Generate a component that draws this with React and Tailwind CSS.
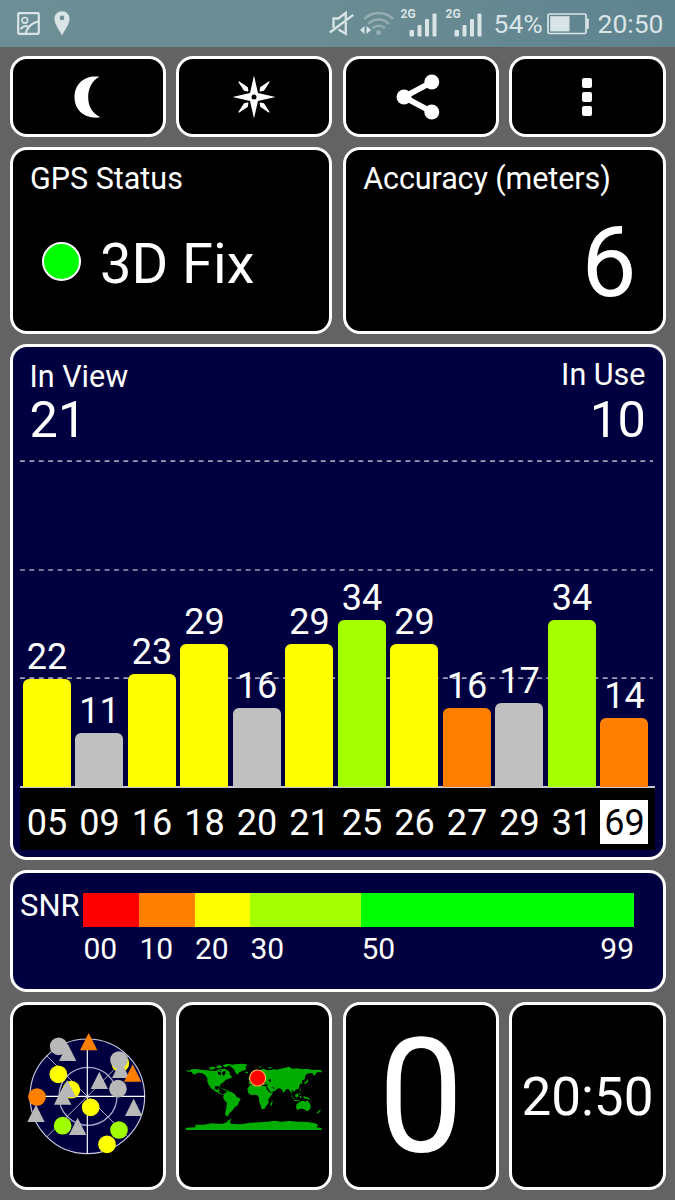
import clsx from 'clsx'

// Base line sits at 0 dB, every dB is this many pixels tall.
const PX_PER_DB = 4.92

const SATELLITES = [
  { id: '05', snr: 22, color: 'bg-[#ffff00]' },
  { id: '09', snr: 11, color: 'bg-[#c0c0c0]' },
  { id: '16', snr: 23, color: 'bg-[#ffff00]' },
  { id: '18', snr: 29, color: 'bg-[#ffff00]' },
  { id: '20', snr: 16, color: 'bg-[#c0c0c0]' },
  { id: '21', snr: 29, color: 'bg-[#ffff00]' },
  { id: '25', snr: 34, color: 'bg-[#a6ff00]' },
  { id: '26', snr: 29, color: 'bg-[#ffff00]' },
  { id: '27', snr: 16, color: 'bg-[#ff8000]' },
  { id: '29', snr: 17, color: 'bg-[#c0c0c0]' },
  { id: '31', snr: 34, color: 'bg-[#a6ff00]' },
  { id: '69', snr: 14, color: 'bg-[#ff8000]', glonass: true },
]

const SNR_SCALE = [
  { label: '00', box: 'w-[56px]', color: 'bg-[#ff0000]' },
  { label: '10', box: 'w-[55.5px]', color: 'bg-[#ff8000]' },
  { label: '20', box: 'w-[55.5px]', color: 'bg-[#ffff00]' },
  { label: '30', box: 'w-[111px]', color: 'bg-[#a6ff00]' },
  { label: '50', box: 'flex-1', color: 'bg-[#00ff00]', last: '99' },
]

const YELLOW = '#ffff00'
const GREY = '#b8b8b8'
const LIME = '#a0ff00'
const ORANGE = '#ff8000'

// Sky plot markers: GPS are dots, GLONASS are triangles (x, y = centre).
const SKY = [
  { x: 146, y: 79, color: GREY },
  { x: 173, y: 98, color: GREY, tri: true },
  { x: 236, y: 66, color: ORANGE, tri: true },
  { x: 331, y: 130, color: YELLOW },
  { x: 332, y: 149, color: GREY, tri: true },
  { x: 327, y: 120, color: GREY },
  { x: 368, y: 160, color: ORANGE, tri: true },
  { x: 145, y: 163, color: YELLOW },
  { x: 268, y: 182, color: GREY, tri: true },
  { x: 324, y: 206, color: GREY },
  { x: 184, y: 209, color: YELLOW },
  { x: 172, y: 207, color: GREY, tri: true },
  { x: 158, y: 229, color: GREY, tri: true },
  { x: 81, y: 231, color: ORANGE },
  { x: 78, y: 281, color: GREY, tri: true },
  { x: 242, y: 262, color: YELLOW },
  { x: 371, y: 263, color: GREY, tri: true },
  { x: 158, y: 317, color: LIME },
  { x: 203, y: 320, color: GREY, tri: true },
  { x: 327, y: 330, color: LIME },
  { x: 291, y: 373, color: YELLOW },
]

function Card({ className, children }) {
  return (
    <section className={clsx('rounded-[17px] border-[3px] border-white', className)}>
      {children}
    </section>
  )
}

function Signal({ className }) {
  return (
    <div className={clsx('relative h-[26px] w-[36px]', className)}>
      <span className="absolute left-0 top-[-3px] text-[12px] font-bold leading-none">2G</span>
      <svg className="absolute bottom-0 right-0" width="28" height="24" viewBox="0 0 28 24" fill="currentColor">
        <rect x="0.5" y="17" width="4.5" height="6.5" rx="1" />
        <rect x="8.5" y="12" width="4" height="11.5" rx="1" />
        <rect x="16" y="6" width="4" height="17.5" rx="1" />
        <rect x="23.5" y="0.5" width="4" height="23" rx="1" />
      </svg>
    </div>
  )
}

function StatusBar() {
  return (
    <header className="flex h-[47px] items-center bg-linear-to-r from-[#6c8f95] via-[#6a8c93] to-[#5f8490] pl-[17px] text-[#d9e4e6]">
      <svg width="23" height="23" viewBox="0 0 23 23" fill="none" stroke="currentColor">
        <rect x="1.2" y="1.2" width="20.6" height="20.6" rx="1" strokeWidth="2.2" />
        <circle cx="7.8" cy="8.3" r="2.8" strokeWidth="1.6" />
        <path d="M3.5 17C6.5 13.8 9 13.2 11.5 15.2M8.5 21C10.5 15.5 14.5 11 21 9.5" strokeWidth="1.9" />
      </svg>
      <svg className="ml-[14px]" width="16" height="25" viewBox="0 0 16 25" fill="currentColor">
        <path
          fillRule="evenodd"
          d="M8 0.3C12.3 0.3 15.5 3.6 15.5 7.8C15.5 13 11.5 18 8 24.5C4.5 18 0.5 13 0.5 7.8C0.5 3.6 3.7 0.3 8 0.3ZM8 4.6A2.3 2.3 0 1 0 8 9.2A2.3 2.3 0 1 0 8 4.6Z"
        />
      </svg>

      <svg className="ml-[258.5px]" width="25" height="25" viewBox="0 0 25 25" fill="none" stroke="currentColor" strokeWidth="2.3">
        <path d="M4.5 17V7.5H9.5L16.8 1.8V9M9.5 18.5L16.8 22.8V11" />
        <path d="M0.8 21.5L24.3 3.8" />
      </svg>
      <svg className="ml-[6px]" width="34" height="25" viewBox="0 0 34 25" fill="none" stroke="currentColor">
        <g strokeWidth="2.6" opacity="0.38">
          <path d="M4.3 8A20 20 0 0 1 33 8" />
          <path d="M8.3 12.8A14.5 14.5 0 0 1 29 12.8" />
          <path d="M12.5 17.2A8.8 8.8 0 0 1 24.8 17.2" />
          <circle cx="18.6" cy="21.6" r="1.2" fill="currentColor" />
        </g>
        <path d="M4.5 15V23L0 19ZM6.5 15V23L11.2 19Z" fill="currentColor" stroke="none" />
      </svg>
      <Signal className="ml-[7px]" />
      <Signal className="ml-[9px]" />
      <span className="ml-[12px] w-[53px] pt-px text-[26.5px] leading-none">54%</span>
      <svg width="42" height="22" viewBox="0 0 42 22" fill="currentColor">
        <rect x="1" y="1" width="38" height="19.5" rx="1.5" fill="none" stroke="currentColor" strokeWidth="1.7" />
        <rect x="3.2" y="3.2" width="19.3" height="15.2" />
        <rect x="39.5" y="5.5" width="2.3" height="10.5" rx="0.8" />
      </svg>
      <span className="ml-[9px] pt-px text-[26.5px] leading-none">20:50</span>
    </header>
  )
}

function Toolbar() {
  return (
    <nav className="grid h-[81px] grid-cols-4 gap-[10.5px]">
      <Card className="flex items-center justify-center bg-black">
        <svg width="27" height="42" viewBox="0 0 27 42" fill="#fff">
          <path d="M25.5 0.8C12 -1.5 0.5 7 0.5 21C0.5 35.5 12.5 43.5 26.5 41.3C17.5 37 14.2 29.5 14.2 21C14.2 12.5 18 4.5 25.5 0.8Z" />
        </svg>
      </Card>
      <Card className="flex items-center justify-center bg-black">
        <svg width="44" height="44" viewBox="-22 -22 44 44" fill="#fff">
          <path d="M0 -21.5L4 -4L21.5 0L4 4L0 21.5L-4 4L-21.5 0L-4 -4Z" />
          <path
            d="M-15 -15L-6.8 -9.6L-6.2 -6.2L-9.6 -6.8ZM15 -15L9.6 -6.8L6.2 -6.2L6.8 -9.6ZM15 15L6.8 9.6L6.2 6.2L9.6 6.8ZM-15 15L-9.6 6.8L-6.2 6.2L-6.8 9.6Z"
            stroke="#fff"
            strokeWidth="1.2"
            strokeLinejoin="round"
          />
          <circle r="2.5" fill="#000" />
        </svg>
      </Card>
      <Card className="flex items-center justify-center bg-black">
        <svg className="-ml-[5px]" width="44" height="46" viewBox="0 0 44 46" fill="#fff">
          <path d="M36 8L8 23L36 38" fill="none" stroke="#fff" strokeWidth="5.8" />
          <circle cx="8" cy="23" r="7.5" />
          <circle cx="35.8" cy="8" r="7.5" />
          <circle cx="35.8" cy="38" r="7.5" />
        </svg>
      </Card>
      <Card className="flex flex-col items-center justify-center gap-[4px] bg-black">
        <i className="size-[10px] rounded-[2px] bg-white" />
        <i className="size-[10px] rounded-[2px] bg-white" />
        <i className="size-[10px] rounded-[2px] bg-white" />
      </Card>
    </nav>
  )
}

function SignalChart() {
  return (
    <Card className="flex h-[516px] flex-col bg-[#000040] px-[7.5px] pb-[7px]">
      <div className="flex justify-between px-[9.5px] pt-[14px]">
        <div>
          <p className="text-[30.5px] leading-[32px]">In View</p>
          <p className="mt-[2px] text-[50.5px] leading-[50px]">21</p>
        </div>
        <div className="-mt-[2px] text-right">
          <p className="text-[30.5px] leading-[32px]">In Use</p>
          <p className="mt-[4px] text-[50.5px] leading-[50px] tracking-[-0.5px]">10</p>
        </div>
      </div>

      <div className="relative mt-auto h-[328px] border-b-2 border-[#c8c8d0]">
        {/* 60, 40 and 20 dB guides */}
        <svg className="absolute left-0 top-0" width="635" height="326" stroke="#9f9fbc" strokeWidth="1.7" strokeDasharray="4.9 4.5">
          <path d="M0 1.2H633M0 110H633M0 218.2H633" />
        </svg>
        <div className="relative flex h-[327px] items-end gap-[4.5px] pl-[2.5px]">
          {SATELLITES.map((s) => (
            <div key={s.id} className="flex w-[48px] flex-col items-center">
              <span className="pl-px text-[36px] leading-[44px]">{s.snr}</span>
              <div
                className={clsx('w-full rounded-t-[6px]', s.color)}
                style={{ height: s.snr * PX_PER_DB }}
              />
            </div>
          ))}
        </div>
      </div>
      <div className="flex h-[62px] items-center gap-[4.5px] bg-black pl-[2.5px] pt-[6px]">
        {SATELLITES.map((s) => (
          <span
            key={s.id}
            className={clsx(
              'flex h-[44px] w-[48px] items-center justify-center pl-px pt-[2px] text-[36px] leading-[44px]',
              s.glonass && 'bg-white text-black',
            )}
          >
            {s.id}
          </span>
        ))}
      </div>
    </Card>
  )
}

function SnrLegend() {
  return (
    <Card className="flex h-[122px] bg-[#000040] pl-[7.5px] pr-[28.5px] pt-[20px]">
      <span className="w-[63px] text-[31px] leading-[26px]">SNR</span>
      <div className="flex flex-1">
        {SNR_SCALE.map((s) => (
          <div key={s.label} className={s.box}>
            <div className={clsx('h-[34px]', s.color)} />
            <div className="flex justify-between text-[30px] leading-[44px]">
              <span className="pl-[0.5px]">{s.label}</span>
              {s.last && <span>{s.last}</span>}
            </div>
          </div>
        ))}
      </div>
    </Card>
  )
}

function SkyPlot() {
  return (
    <svg width="126.67" height="126.67" viewBox="42 39 380 380">
      <circle cx="232" cy="229" r="172" fill="#000040" stroke="#c9c9e6" strokeWidth="3.5" />
      <circle cx="234" cy="229" r="87" fill="none" stroke="#a9a9cc" strokeWidth="4" />
      <path d="M232 57V401M60 229H404" stroke="#fff" strokeWidth="3.5" />
      <path d="M110 107L354 351M354 107L110 351" stroke="#c4c4d8" strokeWidth="2.6" />
      {SKY.map((s) =>
        s.tri ? (
          <path key={`${s.x}-${s.y}`} d={`M${s.x} ${s.y - 27}L${s.x + 26} ${s.y + 25}H${s.x - 26}Z`} fill={s.color} />
        ) : (
          <circle key={`${s.x}-${s.y}`} cx={s.x} cy={s.y} r="26.5" fill={s.color} />
        ),
      )}
    </svg>
  )
}

function WorldMap() {
  return (
    <svg width="140" height="71.67" viewBox="27 60 420 215" fill="#00ad00">
      {/* North America */}
      <path d="M32 90L42 92L50 88L62 87L84 90L100 91L112 93L124 92L130 88L136 94L146 92L140 101L146 108L151 101L152 92L160 96L166 104L172 112L162 116L152 119L147 125L138 132L134 138L137 145L131 139L120 139L119 147L127 150L131 145L134 151L131 156L142 163L150 162L146 165L136 162L120 154L108 145L102 136L97 126L97 114L90 105L80 99L68 98L58 104L52 100L50 95L38 95Z" />
      {/* Arctic islands */}
      <path d="M101 83L112 80L122 82L118 88L106 89ZM124 79L134 76L142 80L136 85L126 84ZM130 87L140 88L148 86L160 92L166 98L160 100L152 94L140 92ZM143 76L154 72L172 72L160 79L150 82Z" />
      {/* Greenland and Iceland */}
      <path d="M162 78L178 73L204 71L218 74L212 80L213 89L203 92L193 97L188 104L182 99L178 90L172 83ZM210 95L220 95L219 99L211 99Z" />
      {/* Caribbean */}
      <path d="M137 145L148 147L158 151L164 153L154 152L144 148Z" />
      {/* South America */}
      <path d="M149 160L158 153L170 156L180 163L184 170L197 176L192 187L187 197L179 202L173 211L167 216L161 223L160 229L153 228L150 221L153 208L156 190L149 181L144 173Z" />
      {/* Africa and Madagascar */}
      <path d="M217 146L225 136L244 133L247 137L260 138L274 139L279 151L285 158L294 158L287 169L280 178L281 188L274 198L268 207L260 207L256 195L252 183L252 173L247 166L238 164L229 166L220 159ZM287 190L293 181L291 195L286 198Z" />
      {/* Europe and Asia */}
      <path d="M222 132L223 124L232 122L230 116L240 110L244 100L252 91L266 86L276 91L290 90L295 87L304 89L316 86L330 83L342 80L352 86L368 85L382 88L396 86L412 90L428 89L440 91L440 97L426 97L422 103L414 107L413 99L401 100L392 105L389 118L380 122L383 131L377 130L373 138L371 146L362 149L358 156L354 152L349 151L353 162L346 155L341 147L333 148L326 160L321 150L315 145L307 146L299 153L287 157L281 148L276 139L278 132L266 134L260 128L250 130L243 126L236 128L232 134Z" />
      <path d="M220 115L228 109L230 118L222 121ZM250 80L262 79L256 83ZM277 83L292 80L286 86ZM386 128L395 123L398 116L400 125L390 132ZM374 149L378 144L376 155Z" />
      {/* South-east Asia */}
      <path d="M344 161L356 173L362 179L353 173ZM360 164L369 160L371 169L363 173ZM356 180L374 181L374 184L358 183ZM374 168L380 169L376 176ZM384 168L398 172L409 180L397 177L388 175ZM371 156L378 163L374 164Z" />
      {/* Australia and New Zealand */}
      <path d="M365 192L378 184L386 182L392 187L396 180L404 190L408 199L404 209L396 214L386 207L377 206L366 210L363 201ZM427 216L438 208L435 215L426 222Z" />
      {/* Antarctica */}
      <path d="M32 263L62 262L60 254L86 254L110 250L142 252L154 247L162 239L170 237L164 245L168 251L196 253L226 248L250 247L276 245L300 242L318 245L344 243L372 245L400 246L420 250L430 254L424 262L440 264V270H32Z" />
      {/* Inland seas */}
      <g fill="#000">
        <path d="M128 94L139 98L137 107L129 101ZM281 119L288 117L287 126L282 124ZM264 128L275 125L273 128L265 131Z" />
        <path d="M274 140L285 156L281 155L273 143ZM288 140L299 144L297 147Z" />
      </g>
      <circle cx="248" cy="114" r="24" fill="#ff0000" stroke="#ffb84d" strokeWidth="3.5" />
    </svg>
  )
}

export default function App() {
  return (
    <div className="h-[1200px] w-[675px] overflow-hidden bg-[#636363] font-['Roboto',sans-serif] text-white">
      <StatusBar />
      <main className="flex flex-col gap-[10px] px-[9.5px] pt-[9px]">
        <Toolbar />

        <div className="grid h-[187px] grid-cols-2 gap-[10.5px]">
          <Card className="bg-black pl-[17.5px] pt-[12px]">
            <h2 className="text-[30.5px] leading-[34px]">GPS Status</h2>
            <div className="mt-[36px] flex items-center pl-[12px]">
              <i className="-mt-[6px] size-[39px] rounded-full border-2 border-white bg-[#00ff00]" />
              <span className="ml-[19px] text-[56px] leading-[64px]">3D Fix</span>
            </div>
          </Card>
          <Card className="bg-black pl-[17.5px] pr-[26px] pt-[12px]">
            <h2 className="text-[30.5px] leading-[34px] tracking-[-0.1px]">Accuracy (meters)</h2>
            <p className="mt-[17px] text-right text-[98px] leading-[100px]">6</p>
          </Card>
        </div>

        <SignalChart />
        <SnrLegend />

        <div className="grid h-[188px] grid-cols-4 gap-[10.5px]">
          <Card className="flex items-center justify-center bg-black">
            <SkyPlot />
          </Card>
          <Card className="flex items-center justify-center bg-black">
            <WorldMap />
          </Card>
          <Card className="flex items-center justify-center bg-black text-[160px] leading-none">
            <span className="scale-x-95 pt-[2px]">0</span>
          </Card>
          <Card className="flex items-center justify-center bg-black pt-[2px] text-[53px] leading-none">20:50</Card>
        </div>
      </main>
    </div>
  )
}
